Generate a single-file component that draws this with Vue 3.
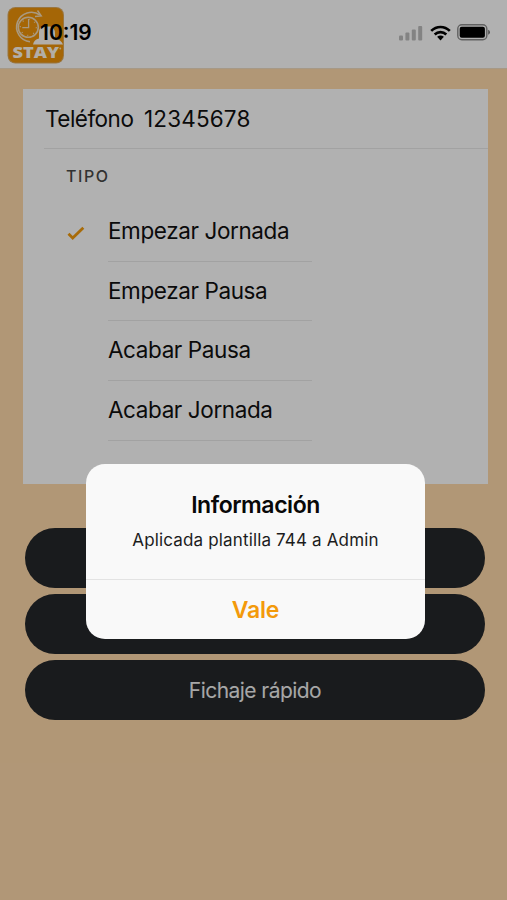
<template>
  <div class="screen">
    <header class="status-bar">
      <svg class="logo" width="60" height="60" viewBox="0 0 60 60">
        <rect x="1.5" y="2" width="56.5" height="56.5" rx="8" fill="#dda95c" />
        <rect x="2.5" y="3" width="54.5" height="54.5" rx="7" fill="#ec9209" />
        <g fill="none" stroke="#f3dcb8">
          <path d="M34 10A14.8 14.8 0 1 0 24 36.8" stroke-width="1.6" />
          <circle cx="22.3" cy="22.3" r="10" stroke-width="1.6" />
          <circle cx="22.3" cy="22.3" r="8" stroke-width="1.2" stroke-dasharray="1 5.28" />
          <path d="M22.6 14v8.6h-6.3" stroke-width="1.3" />
          <path d="M31.5 5.5l3.8 5.5-6.3.5" stroke-width="1.4" />
        </g>
        <path d="M27 39.5q1-5 6-6v-6q0-5 4-6h7q5 1 5 7v5q6 1 8 6z" fill="#fffaf2" />
        <text x="6.5" y="53.2" textLength="46.5" lengthAdjust="spacingAndGlyphs">STAY</text>
        <circle cx="54.3" cy="43.5" r=".9" fill="#ffe3b5" />
      </svg>
      <span class="clock">10:19</span>
      <div class="indicators">
        <svg width="25" height="16" viewBox="0 0 25 16" fill="#bcbcbc">
          <rect x="0" y="10.5" width="4" height="5" rx="1" />
          <rect x="6.4" y="7.5" width="4" height="8" rx="1" />
          <rect x="12.8" y="4.5" width="4" height="11" rx="1" />
          <rect x="19.2" y="1" width="4" height="14.5" rx="1" />
        </svg>
        <svg class="wifi" width="21" height="16" viewBox="0 0 21 16">
          <g fill="none" stroke="#000" stroke-width="2.6">
            <path d="M1.2 5.9C6.5.6 14.5.6 19.8 5.9" />
            <path d="M4.7 9.5C8 6.3 13 6.3 16.3 9.5" />
          </g>
          <path d="M7.1 11.8q3.4-2.6 6.8 0L10.5 15.5z" />
        </svg>
        <svg class="battery" width="34" height="17" viewBox="0 0 34 17">
          <rect x=".8" y=".8" width="29" height="15" rx="4" fill="none" stroke="#8c8c8c" stroke-width="1.4" />
          <rect x="2.7" y="2.8" width="25.2" height="11" rx="2" />
          <path d="M31.2 5.8q1.8.7 1.8 2.5t-1.8 2.5z" fill="#777" />
        </svg>
      </div>
    </header>

    <main class="content">
      <section class="card">
        <div class="phone-row">
          <span class="phone-label">Teléfono</span>
          <span class="phone-number">12345678</span>
        </div>
        <h2 class="list-header">TIPO</h2>
        <ul class="options">
          <li
            v-for="option in options"
            :key="option"
            class="option"
            @click="selected = option"
          >
            <span class="check">
              <svg v-if="selected === option" width="18" height="15" viewBox="0 0 18 15">
                <path d="M1.5 7.8l4.2 4.2L16.3 1.8" fill="none" stroke="#f19a0c" stroke-width="2.8" />
              </svg>
            </span>
            <span class="option-label">{{ option }}</span>
          </li>
        </ul>
      </section>

      <div class="buttons">
        <button class="action"></button>
        <button class="action"></button>
        <button class="action">Fichaje rápido</button>
      </div>
    </main>

    <div v-if="showAlert" class="backdrop">
      <div class="alert">
        <div class="alert-head">
          <h3 class="alert-title">Información</h3>
          <p class="alert-message">Aplicada plantilla 744 a Admin</p>
        </div>
        <button class="alert-button" @click="showAlert = false">Vale</button>
      </div>
    </div>
  </div>
</template>

<script setup>
import { ref } from 'vue'

const options = [
  'Empezar Jornada',
  'Empezar Pausa',
  'Acabar Pausa',
  'Acabar Jornada'
]

const selected = ref('Empezar Jornada')
const showAlert = ref(true)
</script>

<style>
body {
  margin: 0;
}
</style>

<style scoped>
.screen {
  position: relative;
  width: 507px;
  height: 900px;
  overflow: hidden;
  background: #fed8aa;
  color: #101010;
  font-family: Inter, 'Liberation Sans', sans-serif;
}

button {
  padding: 0;
  border: 0;
  font-family: inherit;
}

.status-bar {
  display: flex;
  align-items: flex-start;
  box-sizing: border-box;
  height: 69px;
  padding: 5px 16px 0 6px;
  background: #fefefe;
  border-bottom: 1px solid #eedbc2;
}

.logo text {
  font: 800 16px 'Open Sans', sans-serif;
  fill: #fffaf0;
}

.clock {
  margin: 15px 0 0 -26px;
  color: #000;
  font-size: 21px;
  font-weight: 600;
  line-height: 25px;
  z-index: 1;
}

.indicators {
  display: flex;
  align-items: center;
  margin: 19px 0 0 auto;
}

.wifi {
  margin-left: 6px;
}

.battery {
  margin-left: 6px;
}

.content {
  padding: 20px 19px 0 23px;
}

.card {
  box-sizing: border-box;
  height: 395px;
  background: #fefefe;
}

.phone-row {
  display: flex;
  box-sizing: border-box;
  height: 60px;
  margin-left: 21px;
  padding-left: 1px;
  border-bottom: 1px solid #e8e8e8;
  font-size: 22.5px;
  line-height: 60px;
}

.phone-label {
  width: 99px;
  letter-spacing: -0.5px;
}

.phone-number {
  letter-spacing: 0.15px;
}

.list-header {
  margin: 0;
  padding: 16px 0 0 43px;
  color: #484848;
  font-size: 16px;
  font-weight: 500;
  line-height: 22px;
  letter-spacing: 1.6px;
}

.options {
  margin: 0;
  padding: 15px 0 0 44px;
  list-style: none;
}

.option {
  display: flex;
  height: 59.7px;
}

.check {
  width: 41px;
  padding-top: 23px;
}

.option-label {
  box-sizing: border-box;
  width: 204px;
  border-bottom: 1px solid #e8e8e8;
  font-size: 22.5px;
  line-height: 58px;
  letter-spacing: -0.4px;
  white-space: nowrap;
}

.buttons {
  display: flex;
  flex-direction: column;
  gap: 6px;
  padding: 44px 3px 0 2px;
}

.action {
  height: 60px;
  border-radius: 30px;
  background: #25282a;
  color: #f0f0f0;
  font-size: 21px;
  line-height: 62px;
  letter-spacing: -0.55px;
}

.backdrop {
  position: absolute;
  inset: 0;
  display: flex;
  justify-content: center;
  align-items: flex-start;
  padding-top: 464px;
  padding-left: 4px;
  background: rgba(0, 0, 0, 0.3);
  z-index: 2;
}

.alert {
  width: 339px;
  height: 175px;
  overflow: hidden;
  border-radius: 19px;
  background: #f9f9f9;
  text-align: center;
}

.alert-head {
  box-sizing: border-box;
  height: 116px;
  padding-top: 27px;
  border-bottom: 1px solid #e3e3e3;
}

.alert-title {
  margin: 0;
  color: #080808;
  font-size: 23px;
  font-weight: 600;
  line-height: 28px;
  letter-spacing: -0.45px;
}

.alert-message {
  margin: 10px 0 0;
  color: #1c1c1c;
  font-size: 17px;
  line-height: 22px;
  letter-spacing: 0.15px;
}

.alert-button {
  width: 100%;
  height: 59px;
  background: transparent;
  color: #f39a0b;
  font-size: 23px;
  font-weight: 600;
  letter-spacing: -0.2px;
}
</style>
